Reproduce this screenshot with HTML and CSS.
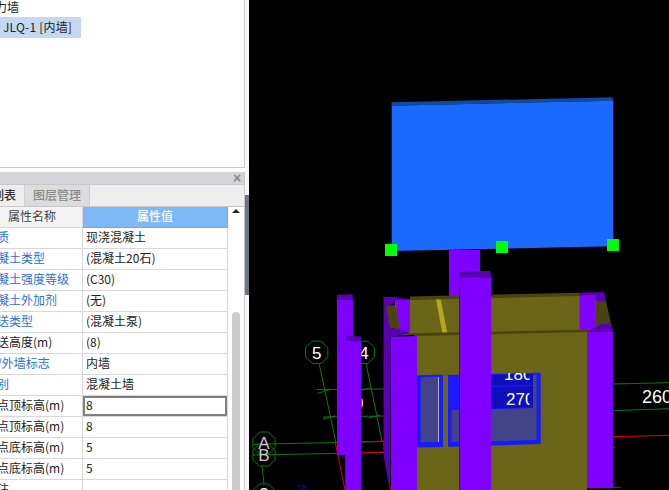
FILE: index.html
```html
<!DOCTYPE html>
<html lang="zh-CN">
<head>
  <meta charset="UTF-8" />
  <title>构件属性</title>
  <link rel="stylesheet" href="styles.css">
</head>
<body>
  <div class="sidebar">
    <div class="tree">
      <div class="tree-group">剪力墙</div>
      <div class="tree-item">JLQ-1 [内墙]</div>
    </div>
    <div class="prop-panel">
      <div class="panel-title"><span class="panel-close">×</span></div>
      <div class="tabs">
        <div class="tab active">属性列表</div>
        <div class="tab">图层管理</div>
      </div>
      <div class="prop-body">
        <table class="prop-table">
          <thead>
            <tr><th class="name-head">属性名称</th><th class="value-head">属性值</th></tr>
          </thead>
          <tbody>
            <tr><td class="link">材质</td><td>现浇混凝土</td></tr>
            <tr><td class="link">混凝土类型</td><td>(混凝土20石)</td></tr>
            <tr><td class="link">混凝土强度等级</td><td>(C30)</td></tr>
            <tr><td class="link">混凝土外加剂</td><td>(无)</td></tr>
            <tr><td class="link">泵送类型</td><td>(混凝土泵)</td></tr>
            <tr><td>泵送高度(m)</td><td>(8)</td></tr>
            <tr><td class="link">内/外墙标志</td><td>内墙</td></tr>
            <tr><td class="link">类别</td><td>混凝土墙</td></tr>
            <tr><td>起点顶标高(m)</td><td class="focused">8</td></tr>
            <tr><td>终点顶标高(m)</td><td>8</td></tr>
            <tr><td>起点底标高(m)</td><td>5</td></tr>
            <tr><td>终点底标高(m)</td><td>5</td></tr>
            <tr><td>备注</td><td></td></tr>
          </tbody>
        </table>
        <div class="scrollbar">
          <div class="scroll-up"></div>
          <div class="scroll-thumb"></div>
        </div>
      </div>
    </div>
  </div>
  <div class="splitter"><div class="splitter-grip"></div></div>
  <div class="viewport">
    <svg class="scene" width="420" height="490" viewBox="249 0 420 490">
      <defs>
        <clipPath id="clip-band"><rect x="491.5" y="373" width="38" height="50"></rect></clipPath>
        <clipPath id="clip-col"><rect x="361.5" y="340" width="30" height="100"></rect></clipPath>
      </defs>

      <!-- axis grid -->
      <g class="axis">
        <polygon points="312.100,341.200 321.300,341.200 327.800,347.700 327.800,356.900 321.300,363.400 312.100,363.400 305.600,356.900 305.600,347.700"></polygon>
        <polygon points="358.700,341.200 367.900,341.200 374.400,347.700 374.400,356.900 367.900,363.400 358.700,363.400 352.200,356.900 352.200,347.700"></polygon>
        <polygon points="259.400,432 268.600,432 275.100,438.500 275.100,447.500 268.600,454 259.400,454 252.900,447.500 252.900,438.500"></polygon>
        <polygon points="259.400,444 268.600,444 275.100,450.500 275.100,459.500 268.600,466 259.400,466 252.900,459.500 252.900,450.500"></polygon>
        <polygon points="259.400,484 268.600,484 275.100,490.500 275.100,499 252.900,499 252.900,490.500"></polygon>
        <line x1="319.300" y1="364.300" x2="336" y2="443"></line>
        <line x1="366" y1="363" x2="382" y2="441"></line>
        <line x1="262" y1="466" x2="264" y2="484"></line>
        <line x1="253" y1="444.300" x2="385" y2="441.500"></line>
        <line x1="253" y1="455" x2="385" y2="452.500"></line>
        <line x1="317" y1="389.500" x2="384" y2="389"></line>
        <line x1="323" y1="417" x2="384" y2="416"></line>
        <line x1="317.700" y1="393.300" x2="331" y2="389.300"></line>
        <line x1="323" y1="419" x2="335" y2="416"></line>
        <line x1="358" y1="391" x2="370" y2="388"></line>
        <line x1="369" y1="418" x2="380" y2="415"></line>
        <line x1="613" y1="384" x2="669" y2="382.700"></line>
        <line x1="613" y1="410.700" x2="669" y2="408.700"></line>
      </g>
      <g class="redline">
        <line x1="335.300" y1="442.700" x2="345" y2="490"></line>
        <line x1="383" y1="441" x2="390.600" y2="490"></line>
        <line x1="361" y1="442" x2="384" y2="441"></line>
        <line x1="361" y1="453" x2="384" y2="452"></line>
        <line x1="613" y1="436.700" x2="669" y2="435.300"></line>
        <line x1="613" y1="447.300" x2="615" y2="447.300"></line>
        <line x1="560" y1="488.300" x2="620.700" y2="487.300"></line>
      </g>
      <text class="label" x="316.700" y="358.500" text-anchor="middle">5</text>
      <text class="label" x="364" y="358.500" text-anchor="middle">4</text>
      <text class="label label-dim" x="264" y="449" text-anchor="middle">A</text>
      <text class="label label-dim" x="264" y="461" text-anchor="middle">B</text>
      <text class="label" x="264" y="500" text-anchor="middle">3</text>
      <text class="label" x="354" y="409" clip-path="url(#clip-col)">0</text>
      <text class="label label-blue" x="297" y="497">7</text>
      <text class="label label-big" x="642" y="403">2600</text>

      <!-- wall on top -->
      <polygon class="panel-edge" points="391.300,102.300 612.700,97.300 613.300,100.700 391.700,105.700"></polygon>
      <polygon class="panel-face" points="391.700,105.700 613.300,100.700 613.300,246.300 391.700,251"></polygon>
      <rect class="handle" x="385" y="244" width="12" height="12"></rect>
      <rect class="handle" x="496" y="241" width="12" height="12"></rect>
      <rect class="handle" x="607" y="239" width="12" height="12"></rect>

      <!-- stem behind the box -->
      <rect class="purple" x="449" y="250" width="31" height="50"></rect>

      <!-- far column -->
      <polygon class="purple-dark" points="336.700,295 352.500,294.300 353,299.500 337,299.500"></polygon>
      <rect class="purple" x="337" y="299.500" width="16" height="155.500"></rect>

      <!-- box -->
      <polygon class="purple-dark" points="383.500,297 391,297 390,490 383.500,455"></polygon>
      <polygon class="olive" points="395,300 595,293 600,330 395,335"></polygon>
      <polygon class="olive-dark" points="410,296.500 580,292.700 580,296 410,300"></polygon>
      <polygon class="olive-dark" points="386,306 395,305 400.700,328.500 390,328.500"></polygon>
      <polygon class="olive-dark" points="596,301 606,301 611,324 602,324 600,330 596,330"></polygon>
      <polygon class="purple-dark" points="383.700,297 395,296.700 410,300 395,301 390,306 386,306"></polygon>
      <polygon class="purple-dark" points="579.500,292.700 604,292 606,301 596,301 595,295 579.500,296"></polygon>
      <polygon class="purple" points="395,300.300 410,299.500 410,333 400.700,333"></polygon>
      <polygon class="purple" points="579.500,296 595.300,295 596,329.500 579.500,329.500"></polygon>
      <polygon class="stripe" points="436,299.500 440.700,299.500 447.300,332.700 442.300,332.700"></polygon>
      <polygon class="olive-dark" points="410,333.300 602,329.300 602,332 417,336.700"></polygon>
      <polygon class="olive" points="417,336 587,332 587,490 417,490"></polygon>
      <polygon class="purple-dark" points="390,328.500 400,328.500 410,333.300 391,337"></polygon>
      <polygon class="purple-dark" points="601,324 611.500,323.300 613,331.700 587,332"></polygon>
      <polygon class="purple" points="391,336.700 417,336 417,490 391,490"></polygon>
      <polygon class="purple" points="587,332 613,331.700 613,487.700 587,487.700"></polygon>

      <!-- windows -->
      <polygon class="glass-blue" points="417,375.300 443,374.700 443,447 417,447.500"></polygon>
      <polygon class="glass" points="420.700,377.300 438.500,376.700 438.500,442 420.700,442.300"></polygon>
      <line class="glass-line" x1="438.500" y1="377" x2="438.500" y2="442"></line>
      <polygon class="glass-blue" points="448,375 540.700,372.700 540.700,444 448,446.700"></polygon>
      <polygon class="glass" points="451.500,410 536.700,408 536.700,440 451.500,442"></polygon>
      <polygon class="glass" points="533,375 536.700,375 536.700,409 533,409"></polygon>
      <polygon class="glass-dark" points="491.300,375 533,374 533,407.500 491.300,408.500"></polygon>
      <line class="band-line" x1="491.300" y1="386.500" x2="533" y2="385.500"></line>
      <g clip-path="url(#clip-band)">
        <text class="label" x="504" y="380">180</text>
        <text class="label" x="506" y="404.500">2700</text>
      </g>

      <!-- near columns -->
      <polygon class="purple-dark" points="459.300,272 490,270.700 491.300,277.500 460,278"></polygon>
      <rect class="purple-edge" x="459" y="277.500" width="1.500" height="212.500"></rect>
      <rect class="purple" x="460" y="277.500" width="31.300" height="212.500"></rect>
      <polygon class="purple-dark" points="345.300,336.300 360.700,336.300 361.300,341.300 345.500,341.500"></polygon>
      <rect class="purple-edge" x="345" y="341" width="1" height="149"></rect>
      <rect class="purple" x="345.500" y="341.300" width="15.800" height="148.700"></rect>
    </svg>
  </div>
</body>
</html>
```

FILE: styles.css
```css
body {
  margin: 0;
  height: 490px;
  display: flex;
  overflow: hidden;
  background-color: #fff;
  font-family: "Noto Sans CJK SC", "Noto Sans", sans-serif;
  font-size: 12px;
  color: #222;
}
.sidebar {
  width: 245px;
  flex: none;
  display: flex;
  flex-direction: column;
  overflow: hidden;
}
.tree {
  box-sizing: border-box;
  margin-top: -4px;
  height: 172px;
  border-right: 1px solid #c8c8c8;
  border-bottom: 1px solid #c8c8c8;
  flex: none;
}
.tree-group {
  height: 21px;
  line-height: 21px;
  margin-left: -17px;
}
.tree-item {
  width: 78px;
  height: 21px;
  line-height: 20px;
  padding-left: 3px;
  background-color: #c6d8f0;
  letter-spacing: 0.2px;
  white-space: nowrap;
}
.prop-panel {
  margin-top: 4px;
  flex: 1;
  display: flex;
  flex-direction: column;
  border-right: 1px solid #c8c8c8;
  min-height: 0;
}
.panel-title {
  height: 12px;
  background-color: #d4d5d9;
  display: flex;
  justify-content: flex-end;
  align-items: center;
  flex: none;
}
.panel-close {
  width: 14px;
  font-family: "Liberation Sans", sans-serif;
  font-size: 14px;
  font-weight: bold;
  line-height: 12px;
  text-align: center;
  color: #888;
}
.tabs {
  height: 21px;
  display: flex;
  flex: none;
  margin-left: -40px;
  background-color: #eee;
  border-top: 1px solid #c8c8c8;
  border-bottom: 1px solid #c8c8c8;
}
.tab {
  width: 64px;
  line-height: 19px;
  text-align: center;
  background-color: #dcdcdc;
  color: #8a8a8a;
  font-weight: 500;
  border-right: 1px solid #d0d0d0;
}
.tab.active {
  background-color: #eee;
  color: #333;
}
.prop-body {
  flex: 1;
  display: flex;
  min-height: 0;
  overflow: hidden;
}
.prop-table {
  margin-left: -18px;
  width: 246px;
  flex: none;
  border-collapse: collapse;
  table-layout: fixed;
  align-self: flex-start;
}
.prop-table th,
.prop-table td {
  height: 18px;
  box-sizing: content-box;
  padding: 0 3px 2px;
  border-right: 1px solid #d8d8d8;
  border-bottom: 1px solid #d8d8d8;
  font-weight: normal;
  line-height: 18px;
  text-align: left;
  white-space: nowrap;
  overflow: hidden;
}
.prop-table tr > :first-child {
  width: 94px;
}
.prop-table th {
  text-align: center;
}
.name-head {
  background-color: #f3f3f3;
  color: #444;
}
.prop-table .value-head {
  background-color: #7fb8f8;
  color: #fff;
  font-weight: 500;
  border-right: 1px solid #6aa6ee;
  border-bottom: 1px solid #6aa6ee;
}
.prop-table .link {
  color: #2a6fe0;
}
.prop-table .focused {
  box-shadow: inset 0 0 0 2px #7f7f7f;
}
.scrollbar {
  flex: 1;
  display: flex;
  flex-direction: column;
  align-items: center;
}
.scroll-up {
  margin-top: 2px;
  width: 0;
  height: 0;
  border-left: 4px solid transparent;
  border-right: 4px solid transparent;
  border-bottom: 4px solid #222;
}
.scroll-thumb {
  margin-top: 99px;
  width: 8px;
  height: 200px;
  flex: none;
  border-radius: 4px 4px 0 0;
  background-color: #ccc;
}
.splitter {
  width: 4px;
  flex: none;
  background-color: #f6f6f6;
}
.splitter-grip {
  margin-top: 195px;
  height: 100px;
  background-color: #6b7680;
}
.viewport {
  flex: 1;
  background-color: #000;
  overflow: hidden;
}
.scene {
  display: block;
}

/* scene colours */
.axis polygon,
.axis line {
  fill: none;
  stroke: #0a7a0a;
  stroke-width: 1;
}
.redline line {
  stroke: #e00000;
  stroke-width: 1;
}
.label {
  font-family: "Liberation Sans", sans-serif;
  font-size: 17px;
  fill: #fff;
}
.label-dim {
  fill: #c8c8c8;
}
.label-blue {
  fill: #0000e0;
}
.label-big {
  font-size: 18px;
}
.panel-edge {
  fill: #134a9e;
}
.panel-face {
  fill: #1a6aff;
}
.handle {
  fill: #00ff00;
}
.purple {
  fill: #8000ff;
}
.purple-dark {
  fill: #5a00b0;
}
.purple-edge {
  fill: #40107a;
}
.olive {
  fill: #6b6517;
}
.olive-dark {
  fill: #4a4510;
}
.stripe {
  fill: #b0a822;
}
.glass-blue {
  fill: #1a1aff;
}
.glass {
  fill: #434387;
}
.glass-dark {
  fill: #0f0fc0;
}
.glass-line {
  stroke: #b0b0b0;
  stroke-width: 1;
}
.band-line {
  stroke: #1a1aff;
  stroke-width: 1;
}
```
